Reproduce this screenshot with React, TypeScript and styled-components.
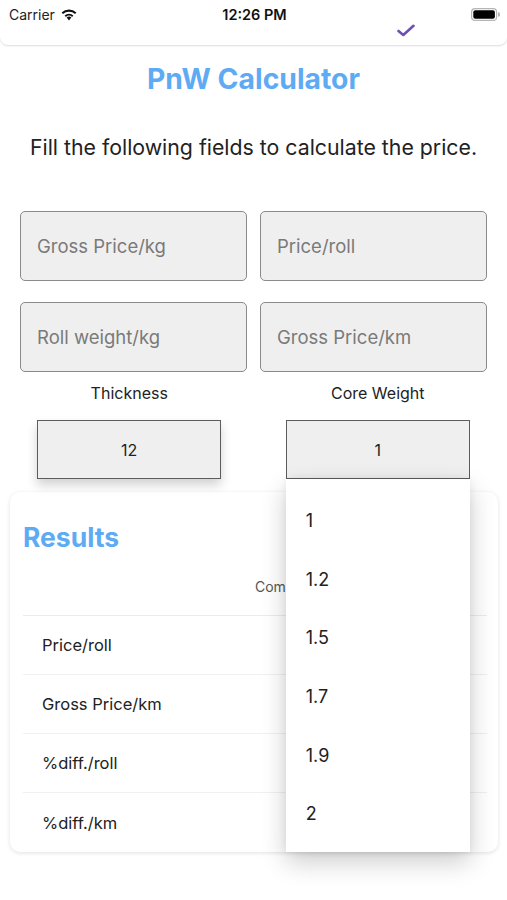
import React from "react"
import styled, { createGlobalStyle } from "styled-components"

const GlobalStyle = createGlobalStyle`
  html, body {
    margin: 0;
    padding: 0;
    background: #ffffff;
    font-family: Inter, "Noto Sans", "Liberation Sans", sans-serif;
    color: #222;
  }
  * { box-sizing: border-box; }
`

const Page = styled.div`
  width: 507px;
  height: 900px;
  position: relative;
  overflow: hidden;
  background: #fff;
`

const Header = styled.div`
  height: 45px;
  background: #fff;
  border-bottom-left-radius: 8px;
  border-bottom-right-radius: 8px;
  box-shadow: 0 1px 2px rgba(0, 0, 0, 0.14);
  display: flex;
  flex-direction: column;
`

const StatusBar = styled.div`
  height: 28px;
  display: grid;
  grid-template-columns: 1fr auto 1fr;
  align-items: center;
  padding: 0 7px 0 9px;
  font-size: 14px;
`

const Carrier = styled.div`
  display: flex;
  align-items: center;
  gap: 5px;
  color: #222;
`

const Time = styled.div`
  font-weight: 600;
  font-size: 14.5px;
  color: #111;
`

const Battery = styled.div`
  justify-self: end;
  display: flex;
  align-items: center;
`

const NavRow = styled.div`
  display: flex;
  justify-content: flex-end;
  padding-right: 92px;
  margin-top: -4px;
`

const Title = styled.h1`
  margin: 18px 0 0;
  text-align: center;
  font-size: 28.3px;
  font-weight: 700;
  color: #5eabf4;
  line-height: 32px;
`

const Subtitle = styled.p`
  margin: 39px 0 0;
  text-align: center;
  font-size: 21.3px;
  line-height: 26px;
  color: #222;
`

const FieldGrid = styled.div`
  margin-top: 51px;
  padding: 0 20px;
  display: grid;
  grid-template-columns: 227px 227px;
  column-gap: 13px;
  row-gap: 21px;
`

const Field = styled.input`
  height: 70px;
  width: 100%;
  border: 1.5px solid #8a8a8a;
  border-radius: 5px;
  background: #efefef;
  padding: 0 16px;
  font-family: inherit;
  font-size: 18.5px;
  color: #222;
  outline: none;
  &::placeholder {
    color: #7a7a7a;
  }
`

const PickerGrid = styled.div`
  padding: 0 5px;
  display: grid;
  grid-template-columns: 1fr 1fr;
`

const PickerColumn = styled.div`
  display: flex;
  flex-direction: column;
  align-items: center;
`

const PickerLabel = styled.div`
  margin-top: 11px;
  font-size: 16px;
  line-height: 20px;
  color: #222;
`

const PickerAnchor = styled.div`
  position: relative;
  margin-top: 17px;
`

const PickerBox = styled.div<{ $open?: boolean }>`
  width: 184px;
  height: 59px;
  border: 1.5px solid #5c5c5c;
  background: #efefef;
  display: flex;
  align-items: center;
  justify-content: center;
  font-size: 16px;
  color: #222;
  box-shadow: ${(p) => (p.$open ? "none" : "0 6px 10px rgba(0, 0, 0, 0.18)")};
`

const Dropdown = styled.ul`
  position: absolute;
  top: 100%;
  left: 0;
  width: 184px;
  height: 373px;
  margin: 0;
  padding: 12px 0 0;
  list-style: none;
  background: #fff;
  box-shadow: 0 10px 24px rgba(0, 0, 0, 0.2), 0 0 8px rgba(0, 0, 0, 0.06);
  z-index: 5;
`

const Option = styled.li`
  height: 58.7px;
  padding-left: 20px;
  display: flex;
  align-items: center;
  font-size: 18px;
  color: #222;
`

const Card = styled.div`
  margin: 13px 9px 0 10px;
  height: 360px;
  border-radius: 10px;
  background: #fff;
  box-shadow: 0 1px 4px rgba(0, 0, 0, 0.12);
  padding: 0 11px 0 13px;
`

const CardTitle = styled.h2`
  margin: 0;
  padding-top: 29px;
  font-size: 26.5px;
  line-height: 32px;
  font-weight: 700;
  color: #5eabf4;
`

const ColumnHead = styled.div`
  height: 63px;
  display: flex;
  align-items: center;
  padding-left: 232px;
  padding-top: 5px;
  font-size: 14px;
  color: #555;
  border-bottom: 1px solid #ececec;
`

const ResultRow = styled.div<{ $last?: boolean }>`
  height: 59px;
  display: flex;
  align-items: center;
  padding-left: 19px;
  font-size: 16.5px;
  color: #222;
  border-bottom: ${(p) => (p.$last ? "none" : "1px solid #f0f0f0")};
`

const Wifi = () => (
  <svg width="18" height="13" viewBox="0 0 18 13">
    <path d="M9 12.5 L6.6 9.6 A3.6 3.6 0 0 1 11.4 9.6 Z" fill="#111" />
    <path d="M4.6 7.5 A6.4 6.4 0 0 1 13.4 7.5 L12.1 9 A4.5 4.5 0 0 0 5.9 9 Z" fill="#111" />
    <path d="M1.6 4.6 A10.6 10.6 0 0 1 16.4 4.6 L15 6.1 A8.6 8.6 0 0 0 3 6.1 Z" fill="#111" />
  </svg>
)

const BatteryIcon = () => (
  <svg width="29" height="13" viewBox="0 0 29 13">
    <rect x="0.6" y="0.6" width="25" height="11.8" rx="3.5" fill="none" stroke="#b5b5b5" strokeWidth="1.2" />
    <rect x="2.3" y="2.3" width="21.6" height="8.4" rx="2" fill="#000" />
    <path d="M27 4.3 a1.8 1.8 0 0 1 0 4.4 Z" fill="#b5b5b5" />
  </svg>
)

const Check = () => (
  <svg width="18" height="13" viewBox="0 0 18 13">
    <path d="M1.5 7 L6.3 11 L16.5 1.8" fill="none" stroke="#6c50b8" strokeWidth="2.6" strokeLinecap="round" strokeLinejoin="round" />
  </svg>
)

const options = ["1", "1.2", "1.5", "1.7", "1.9", "2"]
const results = ["Price/roll", "Gross Price/km", "%diff./roll", "%diff./km"]

export default function App() {
  return (
    <Page>
      <GlobalStyle />
      <Header>
        <StatusBar>
          <Carrier>
            Carrier <Wifi />
          </Carrier>
          <Time>12:26 PM</Time>
          <Battery>
            <BatteryIcon />
          </Battery>
        </StatusBar>
        <NavRow>
          <Check />
        </NavRow>
      </Header>

      <Title>PnW Calculator</Title>
      <Subtitle>Fill the following fields to calculate the price.</Subtitle>

      <FieldGrid>
        <Field placeholder="Gross Price/kg" />
        <Field placeholder="Price/roll" />
        <Field placeholder="Roll weight/kg" />
        <Field placeholder="Gross Price/km" />
      </FieldGrid>

      <PickerGrid>
        <PickerColumn>
          <PickerLabel>Thickness</PickerLabel>
          <PickerAnchor>
            <PickerBox>12</PickerBox>
          </PickerAnchor>
        </PickerColumn>
        <PickerColumn>
          <PickerLabel>Core Weight</PickerLabel>
          <PickerAnchor>
            <PickerBox $open>1</PickerBox>
            <Dropdown>
              {options.map((o) => (
                <Option key={o}>{o}</Option>
              ))}
            </Dropdown>
          </PickerAnchor>
        </PickerColumn>
      </PickerGrid>

      <Card>
        <CardTitle>Results</CardTitle>
        <ColumnHead>Computed</ColumnHead>
        {results.map((r, i) => (
          <ResultRow key={r} $last={i === results.length - 1}>
            {r}
          </ResultRow>
        ))}
      </Card>
    </Page>
  )
}
